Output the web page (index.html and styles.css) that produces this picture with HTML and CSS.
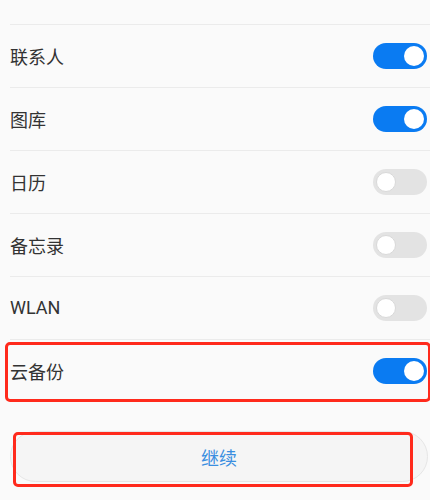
FILE: index.html
```html
<!DOCTYPE html>
<html lang="zh-CN">
<head>
<meta charset="utf-8">
<link rel="stylesheet" href="styles.css">
</head>
<body>
<div class="page">
  <div class="list">
    <div class="row"><span class="label">联系人</span><span class="switch on"><span class="knob"></span></span></div>
    <div class="row"><span class="label">图库</span><span class="switch on"><span class="knob"></span></span></div>
    <div class="row"><span class="label">日历</span><span class="switch"><span class="knob"></span></span></div>
    <div class="row"><span class="label">备忘录</span><span class="switch"><span class="knob"></span></span></div>
    <div class="row"><span class="label latin">WLAN</span><span class="switch"><span class="knob"></span></span></div>
    <div class="row last"><span class="label">云备份</span><span class="switch on"><span class="knob"></span></span><span class="mark mark-row"></span></div>
  </div>
  <div class="action">
    <button class="btn">继续</button>
    <span class="mark mark-btn"></span>
  </div>
</div>
</body>
</html>
```
FILE: styles.css
```css
html, body {
  margin: 0;
  padding: 0;
  background: #fafafa;
  font-family: "Noto Sans CJK SC", "Noto Sans", sans-serif;
  overflow: hidden;
}
.page {
  width: 430px;
  height: 500px;
}
.list {
  padding-top: 24px;
}
.row {
  position: relative;
  margin-left: 10px;
  height: 62px;
  border-top: 1px solid #ebebeb;
  display: flex;
  align-items: center;
  justify-content: space-between;
  padding-right: 3px;
}
.row.last {
  height: 62px;
}
.label {
  font-size: 18px;
  color: #333333;
  line-height: 1;
}
.label.latin {
  font-family: "Roboto", "Noto Sans", sans-serif;
  font-size: 18px;
}
.switch {
  width: 54px;
  height: 26px;
  border-radius: 13px;
  background: #e3e3e3;
  display: flex;
  align-items: center;
  padding: 0 3px;
  box-sizing: border-box;
}
.switch .knob {
  width: 20px;
  height: 20px;
  border-radius: 50%;
  background: #ffffff;
  box-sizing: border-box;
  border: 1px solid #d9d9d9;
}
.switch.on {
  background: #0a7bf2;
  justify-content: flex-end;
}
.switch.on .knob {
  border: none;
}
.mark {
  position: absolute;
  border: 3px solid #ff2a1c;
  border-radius: 5px;
  box-sizing: border-box;
  pointer-events: none;
}
.mark-row {
  left: -5px;
  right: -1px;
  top: 2px;
  bottom: 0;
}
.action {
  position: relative;
  margin-top: 29px;
  padding-left: 10px;
}
.btn {
  display: block;
  width: 418px;
  height: 51px;
  border-radius: 26px;
  border: 1px solid #e6e6e6;
  background: #f5f5f5;
  color: #3a8ee0;
  font-family: "Noto Sans CJK SC", sans-serif;
  font-size: 18px;
  padding: 0;
}
.mark-btn {
  left: 13px;
  top: 1px;
  width: 400px;
  height: 55px;
}
```
